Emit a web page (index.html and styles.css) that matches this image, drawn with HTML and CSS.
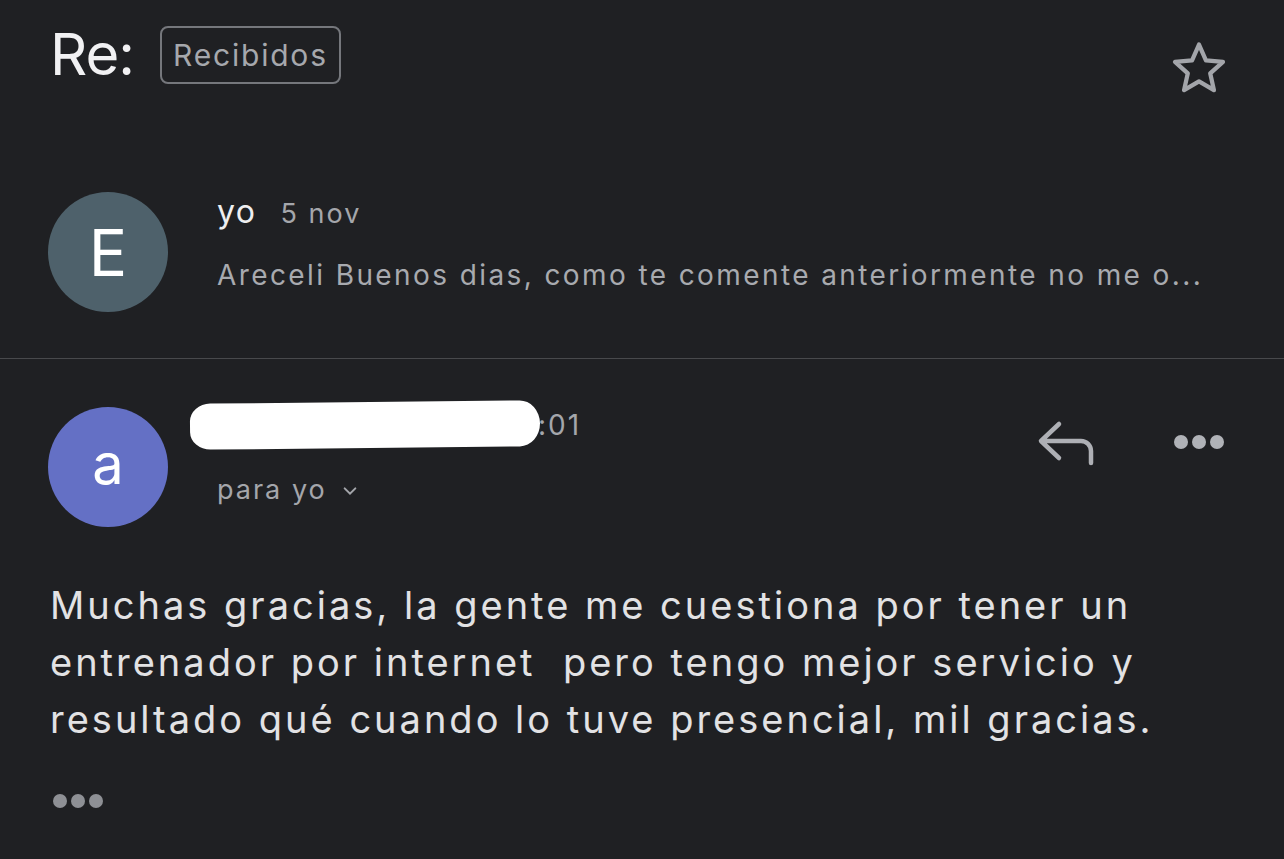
FILE: index.html
```html
<!DOCTYPE html>
<html lang="es">
<head>
    <meta charset="UTF-8">
    <meta name="viewport" content="width=device-width, initial-scale=1.0">
    <title>Re:</title>
    <link rel="stylesheet" href="styles.css">
</head>
<body>
    <div class="mail">
        <div class="subject">
            <h1>Re:</h1>
            <span class="label">Recibidos</span>
            <svg class="star" viewBox="0 0 24 24" width="64" height="64">
                <path d="M12 3.2l2.6 5.9 6.4.6-4.8 4.3 1.4 6.3L12 17l-5.6 3.3 1.4-6.3-4.8-4.3 6.4-.6z" fill="none" stroke="#a3a5aa" stroke-width="1.6" stroke-linejoin="round"/>
            </svg>
        </div>

        <div class="collapsed">
            <div class="avatar avatar-e">E</div>
            <div class="meta">
                <div class="top-line">
                    <span class="sender">yo</span>
                    <span class="date">5 nov</span>
                </div>
                <div class="snippet">Areceli Buenos dias, como te comente anteriormente no me o...</div>
            </div>
        </div>

        <div class="message">
            <div class="msg-head">
                <div class="avatar avatar-a">a</div>
                <div class="meta">
                    <div class="top-line">
                        <span class="redacted"></span>
                        <span class="time">:01</span>
                    </div>
                    <div class="to">para yo
                        <svg viewBox="0 0 12 12" width="16" height="16">
                            <path d="M2 4l4 4 4-4" fill="none" stroke="#a3a5aa" stroke-width="1.5" stroke-linecap="round"/>
                        </svg>
                    </div>
                </div>
                <div class="actions">
                    <svg class="reply" viewBox="0 0 62 50" width="62" height="50">
                        <path d="M24 7L6 24 24 41M7 24H46a10 10 0 0 1 10 10V46" fill="none" stroke="#aeb0b5" stroke-width="4.5" stroke-linecap="round" stroke-linejoin="round"/>
                    </svg>
                    <div class="dots"><i></i><i></i><i></i></div>
                </div>
            </div>
            <p class="body">Muchas gracias, la gente me cuestiona por tener un<br>entrenador por internet&nbsp; pero tengo mejor servicio y<br>resultado qué cuando lo tuve presencial, mil gracias.</p>
            <div class="dots dots-small"><i></i><i></i><i></i></div>
        </div>
    </div>
</body>
</html>
```

FILE: styles.css
```css
html, body {
    margin: 0;
    background: #1f2023;
}
body {
    font-family: Inter, Roboto, sans-serif;
    color: #e4e4e6;
    width: 1284px;
    height: 859px;
    overflow: hidden;
}
.subject {
    display: flex;
    align-items: flex-start;
    padding: 18px 53px 0 50px;
    height: 94px;
}
.subject h1 {
    margin: 0;
    font-size: 58px;
    font-weight: 400;
    line-height: 72px;
    color: #f1f1f3;
    letter-spacing: -1px;
}
.label {
    margin: 8px 0 0 26px;
    padding: 0 11px;
    height: 54px;
    line-height: 54px;
    border: 2px solid #75777c;
    border-radius: 8px;
    font-size: 30px;
    color: #a6a8ad;
    letter-spacing: 1.8px;
}
.star {
    margin: 18px 0 0 auto;
}
.collapsed {
    display: flex;
    align-items: flex-start;
    padding: 80px 0 46px 48px;
    border-bottom: 1px solid #48494c;
}
.avatar {
    width: 120px;
    height: 120px;
    border-radius: 50%;
    flex: none;
    display: flex;
    align-items: center;
    justify-content: center;
    color: #fff;
}
.avatar-e {
    background: #4e616b;
    font-size: 64px;
}
.avatar-a {
    background: #6470c5;
    font-size: 56px;
    padding-bottom: 6px;
    box-sizing: border-box;
}
.meta {
    margin-left: 49px;
}
.top-line {
    display: flex;
    align-items: baseline;
    height: 40px;
}
.sender {
    font-size: 32px;
    color: #eeeef0;
    letter-spacing: 1.5px;
}
.date {
    font-size: 27px;
    color: #a4a6ab;
    margin-left: 24px;
    letter-spacing: 2px;
}
.snippet {
    margin-top: 26px;
    font-size: 28px;
    color: #a8aaaf;
    letter-spacing: 2.4px;
}
.message {
    padding: 48px 0 0 48px;
}
.msg-head {
    display: flex;
    align-items: flex-start;
}
.msg-head .meta {
    margin: -8px 0 0 22px;
}
.msg-head .top-line {
    align-items: center;
    height: 52px;
}
.redacted {
    display: inline-block;
    width: 350px;
    height: 46px;
    background: #fff;
    border-radius: 23px 23px 23px 23px / 20px 26px 26px 20px;
    transform: rotate(-0.6deg);
}
.time {
    font-size: 28px;
    color: #a4a6ab;
    margin-left: -2px;
    letter-spacing: 2px;
}
.to {
    margin: 22px 0 0 27px;
    font-size: 27px;
    color: #a4a6ab;
    letter-spacing: 2px;
}
.to svg {
    margin-left: 6px;
}
.actions {
    margin-left: auto;
    margin-right: 60px;
    display: flex;
    align-items: center;
    gap: 77px;
    margin-top: 10px;
}
.dots {
    display: flex;
    gap: 4px;
}
.dots i {
    width: 14px;
    height: 14px;
    border-radius: 50%;
    background: #b0b2b7;
}
.body {
    margin: 50px 0 0 2px;
    font-size: 38px;
    line-height: 57px;
    color: #e2e2e4;
    letter-spacing: 3px;
    white-space: nowrap;
}
.dots-small {
    margin: 46px 0 0 5px;
}
.dots-small i {
    background: #8e9095;
}
```
